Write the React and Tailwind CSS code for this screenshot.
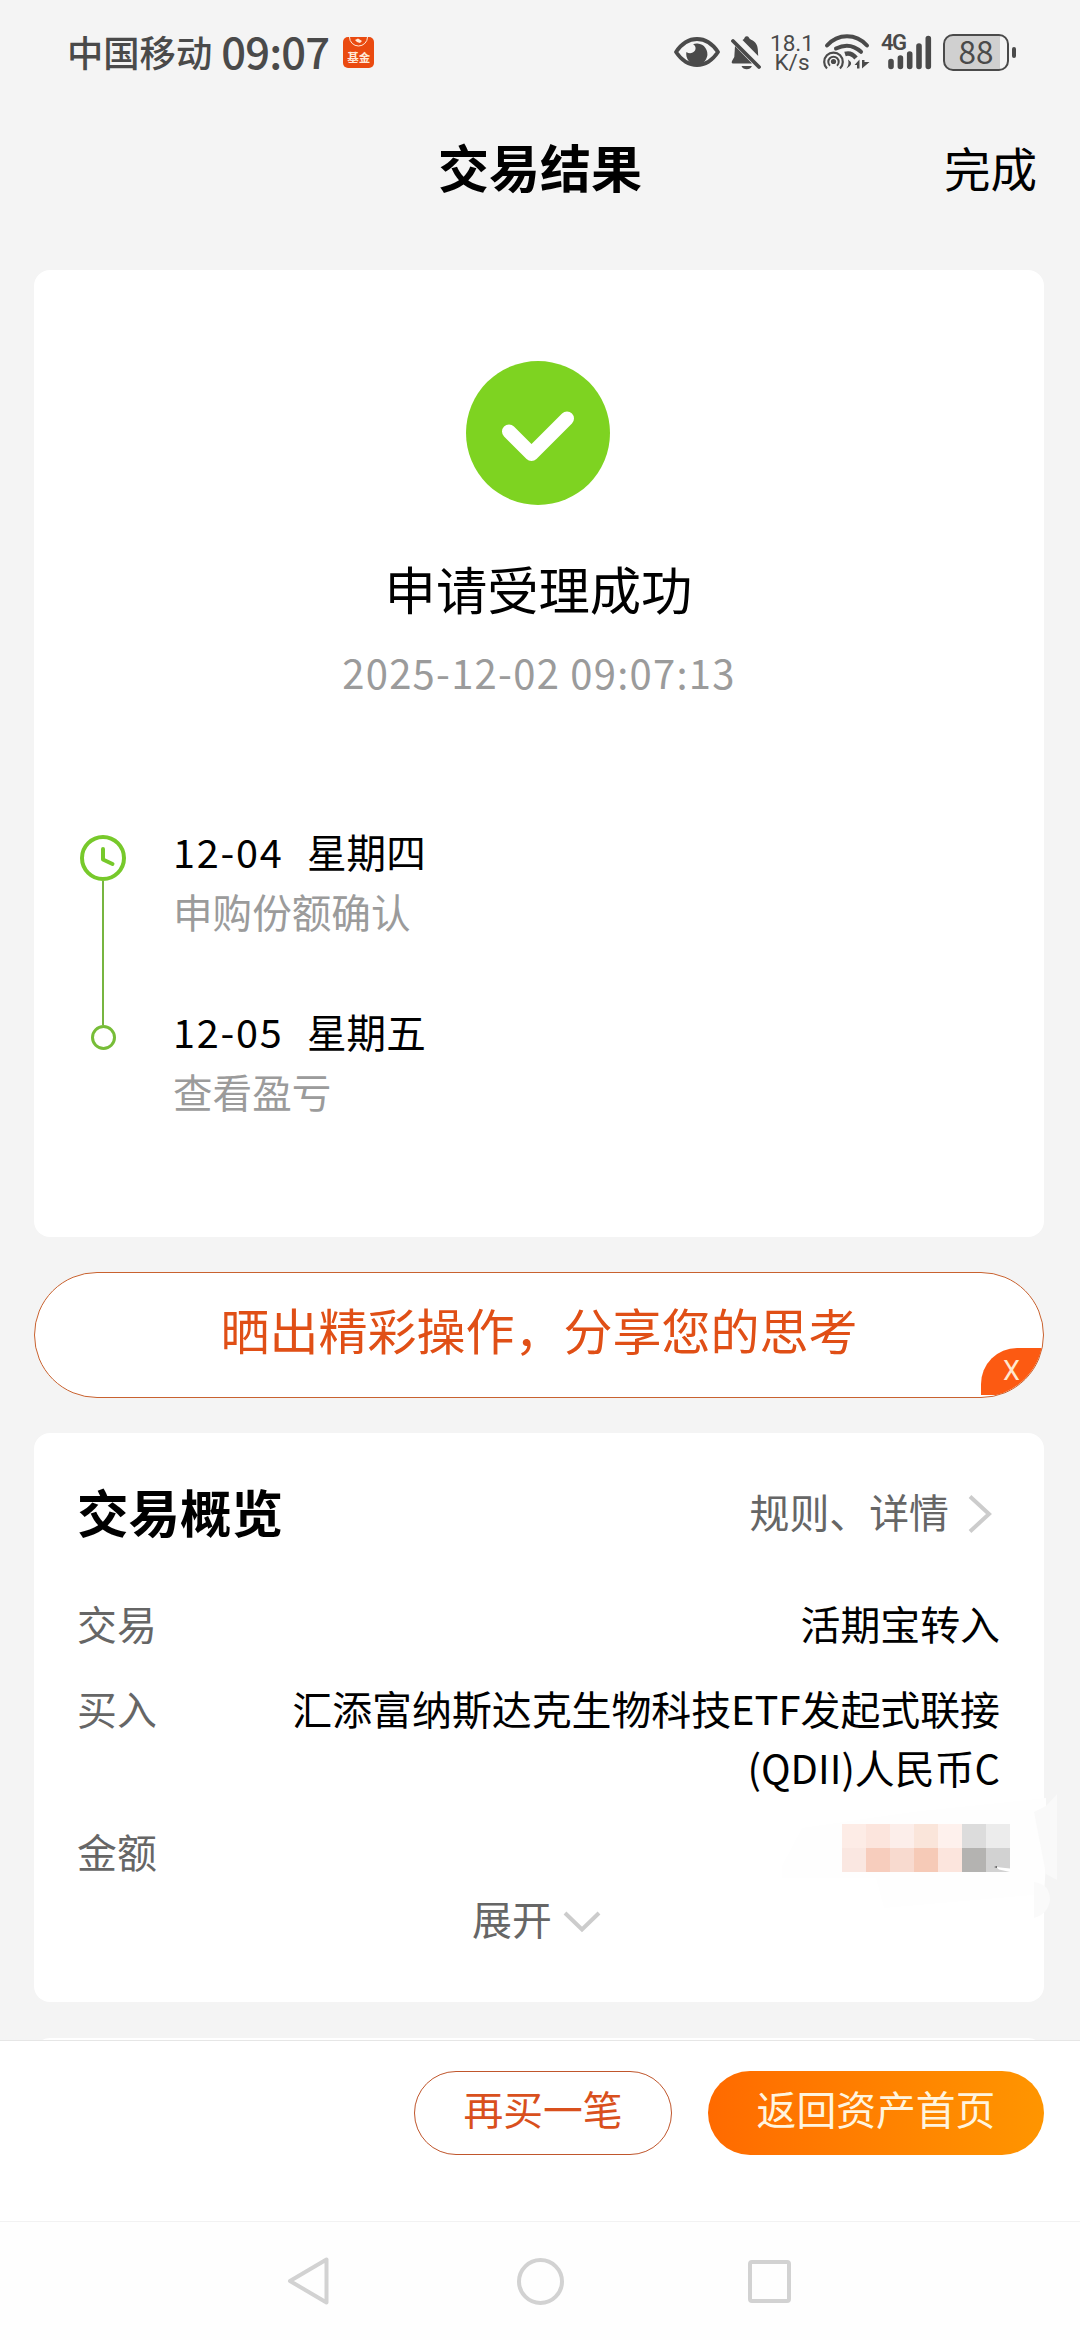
const timeline = [
  { date: '12-04', day: '星期四', text: '申购份额确认' },
  { date: '12-05', day: '星期五', text: '查看盈亏' },
];

const mosaic = [
  'bg-[#fdece6]', 'bg-[#fce5dd]', 'bg-[#fceeea]', 'bg-[#fae5da]', 'bg-[#fef1ed]', 'bg-[#dcdcdc]', 'bg-[#ececec]',
  'bg-[#fae7e1]', 'bg-[#f7cdbd]', 'bg-[#f8dacf]', 'bg-[#f6cab7]', 'bg-[#fce5dd]', 'bg-[#b4b3b1]', 'bg-[#d2d2d2]',
];

function EyeIcon() {
  return (
    <svg width="46" height="32" viewBox="0 0 46 32" fill="none">
      <path d="M2 16C8 7 15 3 23 3s15 4 21 13c-6 9-13 13-21 13S8 25 2 16Z" stroke="#4a4a4a" strokeWidth="3.8" strokeLinejoin="round" />
      <path d="M19 8.2A10.6 10.6 0 1 1 12.4 16c2.500 2 6.500 1.600 8.400-1.200 1.600-2.400.8-5.200-1.800-6.600Z" fill="#4a4a4a" />
    </svg>
  );
}

function MutedBellIcon() {
  return (
    <svg width="30" height="35" viewBox="0 0 30 35" fill="#4a4a4a">
      <path d="M4 11 21 28.500H1.500Q0 27.500 1 26l2.300-4Z" />
      <path d="M11.500 5q1.800-.8 2.200-2.500a2.400 2.400 0 0 1 4.200 0q.4 1.300 2.300 2.200c4.500 2.200 6.300 5.300 6.600 9.500l.4 6.800Z" />
      <path d="M10.500 31h10.400q-1.500 3.300-5.200 3.300T10.500 31Z" />
      <path d="m2 6 26 26" stroke="#4a4a4a" strokeWidth="3.800" strokeLinecap="round" />
    </svg>
  );
}

function WifiIcon() {
  return (
    <svg width="47" height="36" viewBox="0 0 47 36" fill="none" stroke="#4a4a4a">
      <path d="M4 11.500C15-.8 33-.8 44 11.500" strokeWidth="4" strokeLinecap="round" />
      <path d="M13 14.500q14-7 25 3.300" strokeWidth="4" strokeLinecap="round" />
      <path d="M22 20q6-2 11 4" strokeWidth="4.500" />
      <path d="M4 34.500a9.300 9.300 0 1 1 13 0" strokeWidth="2.200" />
      <path d="M7 31.700a5.200 5.200 0 1 1 7 0" strokeWidth="2" />
      <circle cx="10.500" cy="27.500" r="2.600" fill="#4a4a4a" stroke="none" />
      <path d="M23.500 34.500q3-4 1.500-9 7 4.500-1.500 9Z" fill="#4a4a4a" stroke="none" />
      <path d="m31.500 31 5-5.500v9H34V31Zm7.500 3.500v-8.500h2.500v2H46.500Z" fill="#4a4a4a" stroke="none" />
    </svg>
  );
}

function SignalIcon() {
  return (
    <div className="relative w-[51px] h-[35px]">
      <span className="absolute left-0 top-0 font-['Roboto'] font-semibold text-[22px] leading-[16px] tracking-[-1.500px]">4G</span>
      <svg className="absolute left-[7px] top-0" width="44" height="35" viewBox="0 0 44 35" stroke="#4a4a4a" strokeWidth="5.600" strokeLinecap="round">
        <path d="M3 26.500v5M12.400 23v8.500M21.700 19v12.500M31 11v20.500M40.300 3.500v28" />
      </svg>
    </div>
  );
}

function StatusBar() {
  return (
    <div className="h-[104px] pl-[67px] pr-[64px] flex items-center justify-between text-[#4a4a4a]">
      <div className="flex items-center -mt-[2px]">
        <span className="text-[36.300px] leading-[52px] font-medium">中国移动</span>
        <span className="ml-[9px] text-[43.500px] leading-[52px] font-medium tracking-[-0.800px]">09:07</span>
        <div className="relative ml-[14px] mt-[3px] w-[31px] h-[31px] rounded-[5px] bg-[#ea4a10] overflow-hidden text-[#ffe9d8]">
          <svg width="31" height="12" viewBox="0 0 31 12" fill="none" stroke="currentColor">
            <path d="M6.500 0a9 9 0 0 0 18 0" />
            <path d="m12 3 3-1.500L19 4l-2 2-3-1Z" fill="currentColor" stroke="none" />
          </svg>
          <span className="absolute left-[4px] top-[14px] text-[11.500px] leading-[12px] font-bold">基金</span>
        </div>
      </div>
      <div className="flex items-center">
        <EyeIcon />
        <div className="ml-[11px]"><MutedBellIcon /></div>
        <div className="ml-[11px] w-[40px] text-center font-['Roboto'] text-[22.500px] whitespace-nowrap">
          <div className="h-[19px] flex items-center justify-center leading-[18px]">18.1</div>
          <div className="h-[19px] flex items-center justify-center leading-[18px]">K/s</div>
        </div>
        <div className="ml-[11px]"><WifiIcon /></div>
        <div className="ml-[11px]"><SignalIcon /></div>
        <div className="ml-[11px] w-[66px] h-[37px] rounded-[10px] border-[2.500px] border-[#4a4a4a] bg-[linear-gradient(90deg,#d0d0d0_88%,#f4f4f4_88%)] flex items-center justify-center">
          <span className="text-[31.500px] leading-[30px] -translate-y-[2px]">88</span>
        </div>
        <div className="ml-[3px] w-[4px] h-[11px] rounded-full bg-[#4a4a4a]" />
      </div>
    </div>
  );
}

function ResultCard() {
  return (
    <div className="ml-[34px] w-[1010px] h-[967px] rounded-[16px] bg-white pt-[91px] flex flex-col items-center">
      <svg className="-ml-[2px]" width="144" height="144" viewBox="0 0 144 144" fill="none">
        <circle cx="72" cy="72" r="72" fill="#7ed321" />
        <path d="M43 70.500 65.500 93 101 57.500" stroke="#fff" strokeWidth="14" strokeLinecap="round" strokeLinejoin="round" />
      </svg>
      <h2 className="mt-[53px] -ml-px text-[51.300px] leading-[60px]">申请受理成功</h2>
      <p className="mt-[24px] text-[40px] leading-[60px] tracking-[1.250px] text-[#9b9b9b]">2025-12-02 09:07:13</p>
      <div className="mt-[119px] w-full pl-[46px]">
        {timeline.map((item, i) => (
          <div key={i} className="flex h-[180px]">
            <div className="w-[46px] flex flex-col items-center">
              {i === 0 ? (
                <>
                  <svg className="mt-[14px] shrink-0" width="46" height="46" viewBox="0 0 46 46" fill="none" stroke="#77c92b" strokeWidth="4" strokeLinecap="round" strokeLinejoin="round">
                    <circle cx="23" cy="23" r="21" />
                    <path d="M23 14v10.500l9.500 4.500" />
                  </svg>
                  <div className="w-[2px] grow bg-[#77b540]" />
                </>
              ) : (
                <>
                  <div className="w-[2px] h-[24px] bg-[#77b540]" />
                  <div className="w-[25px] h-[25px] rounded-full border-[3px] border-[#77bd38]" />
                </>
              )}
            </div>
            <div className="ml-[47px] text-[39.600px] leading-[60px]">
              <div className="flex">
                <span className="w-[134px] tracking-[1.800px]">{item.date}</span>
                <span>{item.day}</span>
              </div>
              <div className="text-[#9b9b9b]">{item.text}</div>
            </div>
          </div>
        ))}
      </div>
    </div>
  );
}

function ShareBanner() {
  return (
    <div className="relative ml-[34px] mt-[35px] w-[1010px] h-[126px] rounded-full border border-[#c9622f] bg-white overflow-hidden flex items-center justify-center pb-[13px]">
      <span className="text-[49px] leading-[60px] text-[#e04f16]">晒出精彩操作，分享您的思考</span>
      <div className="absolute right-0 bottom-[2px] w-[62px] h-[47px] rounded-tl-[36px] bg-[#fc5a12] text-[#ffe8d0] text-[27px] leading-[46px] pl-[22px] font-['Roboto']">X</div>
    </div>
  );
}

function HiddenAmount() {
  return (
    <div className="relative mr-[-10px] mt-[3px] self-start">
      {/* smudged area around the hidden amount */}
      <svg className="absolute left-[-60px] top-[-30px]" width="280" height="130" viewBox="0 0 280 130">
        <path d="M0 72 20 34 130 18 264 4v66l-2 30-160 14-8-30H0Z" fill="#fefefe" />
        <path d="M252 18 264 12l11-12v86l-11-6Z" fill="#f9f9f9" />
        <path d="M252 88q16 2 16 18-2 14-16 18Z" fill="#fafafa" />
      </svg>
      <div className="relative grid grid-cols-7">
        {mosaic.map((color, i) => (
          <div key={i} className={`w-[24px] h-[24px] ${color}`} />
        ))}
      </div>
      <svg className="absolute right-0 bottom-0" width="16" height="7" viewBox="0 0 16 7">
        <path d="m2 2 14 1.500V7L5 4.500Z" fill="#fff" />
        <path d="m0 2 3-1v2Z" fill="#555" />
      </svg>
    </div>
  );
}

function OverviewCard() {
  return (
    <div className="ml-[34px] mt-[35px] w-[1010px] h-[569px] rounded-[16px] bg-white pt-[48px] pl-[43px] pr-[44px] text-[39.900px] leading-[60px]">
      <div className="flex items-center justify-between">
        <h3 className="text-[51.500px] font-bold">交易概览</h3>
        <div className="flex items-center pr-[7px] text-[#666]">
          <span>规则、详情</span>
          <svg className="ml-[19px] mt-[5px]" width="25" height="40" viewBox="0 0 25 40" fill="none" stroke="#ccc" strokeWidth="4">
            <path d="m2 2.500 19 17.500L2 37.500" />
          </svg>
        </div>
      </div>
      <div className="mt-[52px] flex justify-between">
        <span className="text-[#666]">交易</span>
        <span>活期宝转入</span>
      </div>
      <div className="mt-[25px] flex justify-between leading-[59px]">
        <span className="text-[#666]">买入</span>
        <span className="text-right">汇添富纳斯达克生物科技ETF发起式联接<br />(QDII)人民币C</span>
      </div>
      <div className="mt-[25px] flex justify-between">
        <span className="text-[#666]">金额</span>
        <HiddenAmount />
      </div>
      <div className="mt-[7px] -ml-[4px] flex items-center justify-center text-[#666]">
        <span>展开</span>
        <svg className="ml-[11px] mt-[7px]" width="38" height="22" viewBox="0 0 38 22" fill="none" stroke="#ccc" strokeWidth="4">
          <path d="m2 2 17 16.500L36 2" />
        </svg>
      </div>
    </div>
  );
}

function ActionBar() {
  return (
    <div className="h-[181px] shrink-0 border-t border-[#e6e6e6] bg-white pt-[30px] pr-[36px] flex justify-end items-start gap-[36px] text-[39.800px] leading-[60px]">
      <button className="w-[258px] h-[84px] pb-[11px] rounded-full border border-[#c0562c] text-[#d9501d] flex items-center justify-center">再买一笔</button>
      <button className="w-[336px] h-[84px] pb-[11px] rounded-full bg-linear-to-r from-[#ff6a00] to-[#ff9500] text-[#fff4de] flex items-center justify-center">返回资产首页</button>
    </div>
  );
}

function NavBar() {
  return (
    <div className="h-[119px] shrink-0 border-t border-[#f2f2f2] bg-[#fefefe] flex items-center pl-[287px]">
      <svg width="43" height="48" viewBox="0 0 43 48" fill="none" stroke="#d2d2d2" strokeWidth="4" strokeLinejoin="round">
        <path d="M3 24 39.500 2.500v43Z" />
      </svg>
      <div className="ml-[187px] w-[47px] h-[47px] rounded-full border-[4px] border-[#d2d2d2]" />
      <div className="ml-[184px] w-[43px] h-[43px] rounded-[4px] border-[4px] border-[#d2d2d2]" />
    </div>
  );
}

export default function App() {
  return (
    <div className="w-[1080px] h-[2340px] overflow-hidden flex flex-col bg-[#f4f4f4] text-black font-['Noto_Sans_CJK_SC',sans-serif]">
      <div className="h-[2040px] shrink-0 overflow-hidden">
        <StatusBar />
        <div className="h-[120px] mb-[46px] px-[43px] grid grid-cols-3 items-center">
          <h1 className="col-start-2 text-center text-[51px] leading-[60px] font-bold mt-[4px]">交易结果</h1>
          <span className="text-right text-[46.500px] leading-[60px] mt-[5px]">完成</span>
        </div>
        <ResultCard />
        <ShareBanner />
        <OverviewCard />
        <div className="ml-[34px] mt-[36px] w-[1010px] h-[40px] rounded-[16px] bg-white" />
      </div>
      <ActionBar />
      <NavBar />
    </div>
  );
}
